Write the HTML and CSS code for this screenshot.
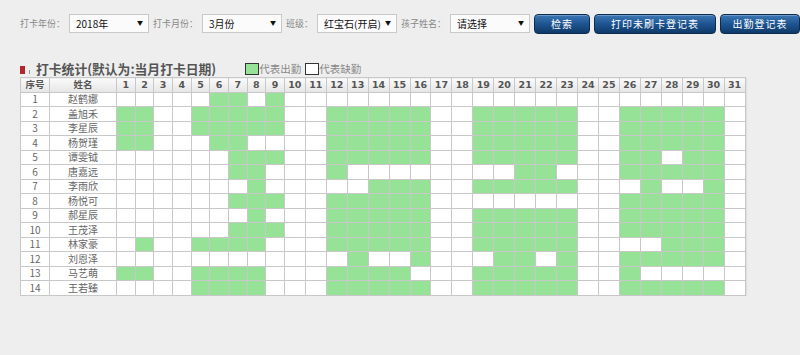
FILE: index.html
```html
<!DOCTYPE html>
<html lang="zh-CN">
<head>
    <meta charset="UTF-8">
    <meta name="viewport" content="width=device-width, initial-scale=1.0">
    <title>打卡统计</title>
    <link rel="stylesheet" href="styles.css">
</head>
<body>
    <div class="toolbar">
        <label class="field-label" for="year">打卡年份：</label>
        <span class="sel"><select id="year"><option>2018年</option></select></span>

        <label class="field-label" for="month">打卡月份：</label>
        <span class="sel"><select id="month"><option>3月份</option></select></span>

        <label class="field-label" for="klass">班级：</label>
        <span class="sel"><select id="klass"><option>红宝石(开启)</option></select></span>

        <label class="field-label" for="child">孩子姓名：</label>
        <span class="sel"><select id="child"><option>请选择</option></select></span>

        <button class="btn btn-search" type="button">检索</button>
        <button class="btn btn-print" type="button">打印未刷卡登记表</button>
        <button class="btn btn-attend" type="button">出勤登记表</button>
    </div>

    <div class="title-row">
        <span class="mark"></span>
        <h2 class="title">打卡统计(默认为:当月打卡日期)</h2>
        <span class="legend"><i class="box on"></i>代表出勤</span>
        <span class="legend"><i class="box"></i>代表缺勤</span>
    </div>

    <table class="grid">
        <colgroup id="cols"></colgroup>
        <thead><tr id="headRow"></tr></thead>
        <tbody id="gridBody"></tbody>
    </table>

    <script>
        const names = ['赵鹤娜', '盖旭禾', '李星辰', '杨贺瑾', '谭雯钺', '唐嘉远', '李雨欣',
                       '杨悦可', '郝星辰', '王茂泽', '林家豪', '刘恩泽', '马艺萌', '王若臻'];

        // days with a card swipe, per child
        const present = [
            '6-7,9',
            '1-2,5-9,12-16,19-23,26-30',
            '1-2,5-9,12-16,19-23,26-30',
            '1-2,6-7,12-16,19-23,26-30',
            '7-9,12-16,19-23,26-27,29-30',
            '7-8,12,21-22,26-30',
            '8,14-16,19-23,27,30',
            '7-9,12-16,26-30',
            '8,12-16,19-23,26-30',
            '7-9,12-16,19-23,26-30',
            '2,5-8,12-16,19-23,28-30',
            '13,16,20-21,23,26-30',
            '1-2,5-8,12-15,19-23,26',
            '5-8,12-16,19-23,26-30'
        ];

        function parseDays(str) {
            const days = new Set();
            str.split(',').forEach(part => {
                const [a, b] = part.split('-').map(Number);
                for (let d = a; d <= (b || a); d++) days.add(d);
            });
            return days;
        }

        const cols = document.getElementById('cols');
        const headRow = document.getElementById('headRow');
        const gridBody = document.getElementById('gridBody');

        let colHtml = '<col class="c-no"><col class="c-name">';
        let headHtml = '<th>序号</th><th>姓名</th>';
        for (let d = 1; d <= 31; d++) {
            colHtml += `<col class="${d < 10 ? 'c-d1' : 'c-d2'}">`;
            headHtml += `<th>${d}</th>`;
        }
        cols.innerHTML = colHtml;
        headRow.innerHTML = headHtml;

        let bodyHtml = '';
        names.forEach((name, i) => {
            const days = parseDays(present[i]);
            bodyHtml += `<tr><td>${i + 1}</td><td>${name}</td>`;
            for (let d = 1; d <= 31; d++) {
                bodyHtml += days.has(d) ? '<td class="on"></td>' : '<td></td>';
            }
            bodyHtml += '</tr>';
        });
        gridBody.innerHTML = bodyHtml;
    </script>
</body>
</html>
```

FILE: styles.css
```css
body {
    margin: 0;
    background-color: #eeeeee;
    font-family: "Noto Sans CJK SC", sans-serif;
    color: #666;
    overflow: hidden;
}
.toolbar {
    display: flex;
    align-items: center;
    gap: 4px;
    padding: 13px 0 0 20px;
    height: 21px;
    white-space: nowrap;
    overflow: hidden;
}
.field-label {
    font-size: 9px;
    color: #888;
    flex-shrink: 0;
}
.sel {
    position: relative;
    display: block;
    flex-shrink: 0;
}
.sel select {
    appearance: none;
    -webkit-appearance: none;
    display: block;
    width: 80px;
    height: 19px;
    margin: 0;
    padding: 0 0 0 6px;
    border: 1px solid #c9c9c9;
    border-radius: 0;
    background: #fbfbfb;
    font-family: "Noto Sans CJK SC", sans-serif;
    font-size: 10px;
    color: #111;
}
.sel::after {
    content: "▼";
    position: absolute;
    right: 6px;
    top: 6px;
    font-size: 6px;
    line-height: 6px;
    color: #111;
    pointer-events: none;
}
.btn {
    flex-shrink: 0;
    height: 20px;
    padding: 0;
    border: 1px solid #0b2b50;
    border-radius: 4px;
    background: linear-gradient(#3c78b5, #1d5490 50%, #0f3a69);
    box-shadow: inset 0 1px 0 rgba(255,255,255,0.25);
    color: #fff;
    font-family: "Noto Sans CJK SC", sans-serif;
    font-size: 10px;
    letter-spacing: 1px;
    cursor: pointer;
}
.btn-search { width: 56px; }
.btn-print { width: 122px; }
.btn-attend { width: 80px; }

.title-row {
    display: flex;
    align-items: center;
    height: 17px;
    margin-top: 26px;
    padding-left: 20px;
}
.mark {
    display: block;
    width: 5px;
    height: 8px;
    margin-top: 2px;
    background: #b5262c;
    box-shadow: 7px 2px 0 -2px #999;
}
.title {
    margin: 0 0 0 11px;
    font-size: 12.8px;
    font-weight: bold;
    color: #555;
    line-height: 17px;
}
.legend {
    display: flex;
    align-items: center;
    font-size: 10.5px;
    color: #888;
}
.title + .legend {
    margin-left: 29px;
}
.legend + .legend {
    margin-left: 4px;
}
.box {
    display: block;
    width: 12px;
    height: 10px;
    border: 1px solid #333;
    background: #fff;
}
.box.on {
    background: #96e296;
}

.grid {
    margin-left: 20px;
    width: 725px;
    table-layout: fixed;
    border-collapse: collapse;
    background: #fff;
    box-shadow: 1px 1px 1px rgba(0,0,0,0.06);
}
.c-no { width: 29px; }
.c-name { width: 67px; }
.c-d1 { width: 18.67px; }
.c-d2 { width: 20.95px; }
.grid tr {
    height: 14.5px;
}
.grid th,
.grid td {
    padding: 0;
    border: 1px solid #c8c8c8;
    text-align: center;
    font-size: 10px;
    line-height: 12px;
    overflow: hidden;
}
.grid th {
    background: linear-gradient(#fafafa, #e5e5e5);
    color: #555;
    font-family: "DejaVu Sans", "Noto Sans CJK SC", sans-serif;
    font-size: 9.5px;
    font-weight: bold;
}
.grid td {
    color: #666;
}
.grid td.on {
    background: #96e296;
}
```
